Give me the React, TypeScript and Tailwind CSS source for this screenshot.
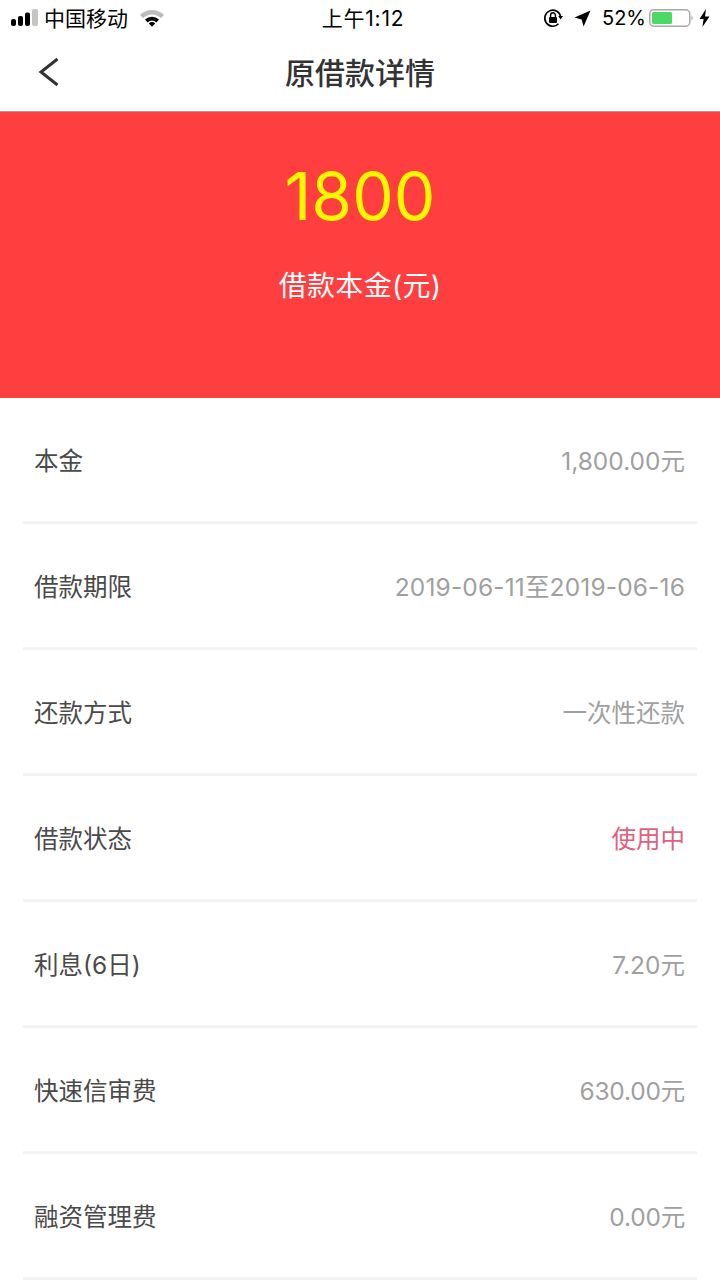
const rows: { label: string; value: string; color?: string; track?: string }[] = [
  { label: "本金", value: "1,800.00元" },
  { label: "借款期限", value: "2019-06-11至2019-06-16", track: "tracking-[0.15px]" },
  { label: "还款方式", value: "一次性还款" },
  { label: "借款状态", value: "使用中", color: "text-[#e2607c]" },
  { label: "利息(6日)", value: "7.20元" },
  { label: "快速信审费", value: "630.00元", track: "tracking-[-0.2px]" },
  { label: "融资管理费", value: "0.00元", track: "tracking-[-0.2px]" },
];

function Signal() {
  return (
    <svg width="28" height="18" viewBox="0 0 28 18" className="block">
      <rect x="0" y="10" width="5" height="7" rx="2" fill="#000" />
      <rect x="7" y="7" width="5" height="10" rx="2" fill="#000" />
      <rect x="14" y="3.5" width="5" height="13.5" rx="2" fill="#000" />
      <rect x="21" y="0" width="6" height="17" rx="2" fill="#c4c4c4" />
    </svg>
  );
}

function Wifi() {
  return (
    <svg width="26" height="18" viewBox="0 0 26 18" className="block">
      <path d="M1 6 A17 17 0 0 1 25 6 L21.8 9.2 A12.5 12.5 0 0 0 4.2 9.2 Z" fill="#bdbdbd" />
      <path d="M6 10.6 A10 10 0 0 1 20 10.6 L17.4 13.4 A6 6 0 0 0 8.6 13.4 Z" fill="#000" />
      <path d="M9.8 14.4 A4.6 4.6 0 0 1 16.2 14.4 L13 17.8 Z" fill="#000" />
    </svg>
  );
}

function RotationLock() {
  return (
    <svg width="20" height="20" viewBox="0 0 20 20" className="block">
      <path d="M17.6 8.5 A8 8 0 1 0 15.5 15.8" fill="none" stroke="#000" strokeWidth="1.6" />
      <path d="M15.2 8 L20 8 L17.6 11.4 Z" fill="#000" />
      <rect x="6" y="9" width="8" height="6" rx="1" fill="#000" />
      <path d="M7.6 9 V7.2 A2.4 2.4 0 0 1 12.4 7.2 V9" fill="none" stroke="#000" strokeWidth="1.4" />
    </svg>
  );
}

function Location() {
  return (
    <svg width="17" height="17" viewBox="0 0 17 17" className="block">
      <path d="M16.5 0.5 L9.6 16.5 L7.6 9.4 L0.5 7.4 Z" fill="#000" />
    </svg>
  );
}

function Battery() {
  return (
    <svg width="44" height="18" viewBox="0 0 44 18" className="block">
      <rect x="0.75" y="0.75" width="40" height="16.5" rx="4" fill="none" stroke="#a8a8a8" strokeWidth="1.5" />
      <rect x="3" y="3" width="20" height="12" rx="1.5" fill="#4cd964" />
      <path d="M42.5 6.5 A3 3 0 0 1 42.5 11.5 Z" fill="#a8a8a8" />
    </svg>
  );
}

function Bolt() {
  return (
    <svg width="11" height="18" viewBox="0 0 11 18" className="block">
      <path d="M7 0 L0.5 10 L4.6 10 L3.4 18 L10.5 7.4 L6 7.4 Z" fill="#000" />
    </svg>
  );
}

export default function App() {
  return (
    <div
      className="w-[720px] h-[1280px] overflow-hidden bg-white flex flex-col"
      style={{ fontFamily: '"Inter", "Noto Sans CJK SC", sans-serif' }}
    >
      <div className="h-9 shrink-0 flex items-center justify-between pl-[11px] pr-[10px] text-black">
        <div className="flex items-center w-[240px]">
          <Signal />
          <span className="ml-[5px] text-[21px] leading-none">中国移动</span>
          <span className="ml-[11px]"><Wifi /></span>
        </div>
        <div className="text-[21px] leading-none ml-[5px] tracking-[0.8px]">上午1:12</div>
        <div className="flex items-center justify-end w-[240px]">
          <RotationLock />
          <span className="ml-[11px]"><Location /></span>
          <span className="ml-[11px] text-[20px] leading-none">52%</span>
          <span className="ml-[3px]"><Battery /></span>
          <span className="ml-[6px]"><Bolt /></span>
        </div>
      </div>

      <div className="relative h-[75px] shrink-0 flex items-center justify-center pb-[2px]">
        <svg width="22" height="30" viewBox="0 0 22 30" className="absolute left-[38px] top-[21px]">
          <path d="M19.5 2 L3 15 L19.5 28" fill="none" stroke="#333" strokeWidth="3" />
        </svg>
        <span className="text-[30px] leading-none font-medium text-[#333]">原借款详情</span>
      </div>

      <div className="h-[287px] shrink-0 bg-[#ff3f3f] border-t border-[#c98a8a] flex flex-col items-center pt-[44px]">
        <div className="text-[66px] leading-[80px] text-[#fff600]">1800</div>
        <div className="mt-[30px] text-[28px] leading-[40px] text-white tracking-[0.3px]">借款本金(元)</div>
      </div>

      <div className="flex flex-col px-[23px]">
        {rows.map((r) => (
          <div
            key={r.label}
            className="h-[126px] shrink-0 flex items-center justify-between pl-[11px] pr-[12px] border-b-[3px] border-[#f3f3f3] pt-[3px]"
          >
            <span className="text-[24.5px] leading-none text-[#4a4a4a]">{r.label}</span>
            <span className={`text-[24.5px] leading-none ${r.color ?? "text-[#a0a0a0]"} ${r.track ?? ""}`}>{r.value}</span>
          </div>
        ))}
      </div>
    </div>
  );
}
